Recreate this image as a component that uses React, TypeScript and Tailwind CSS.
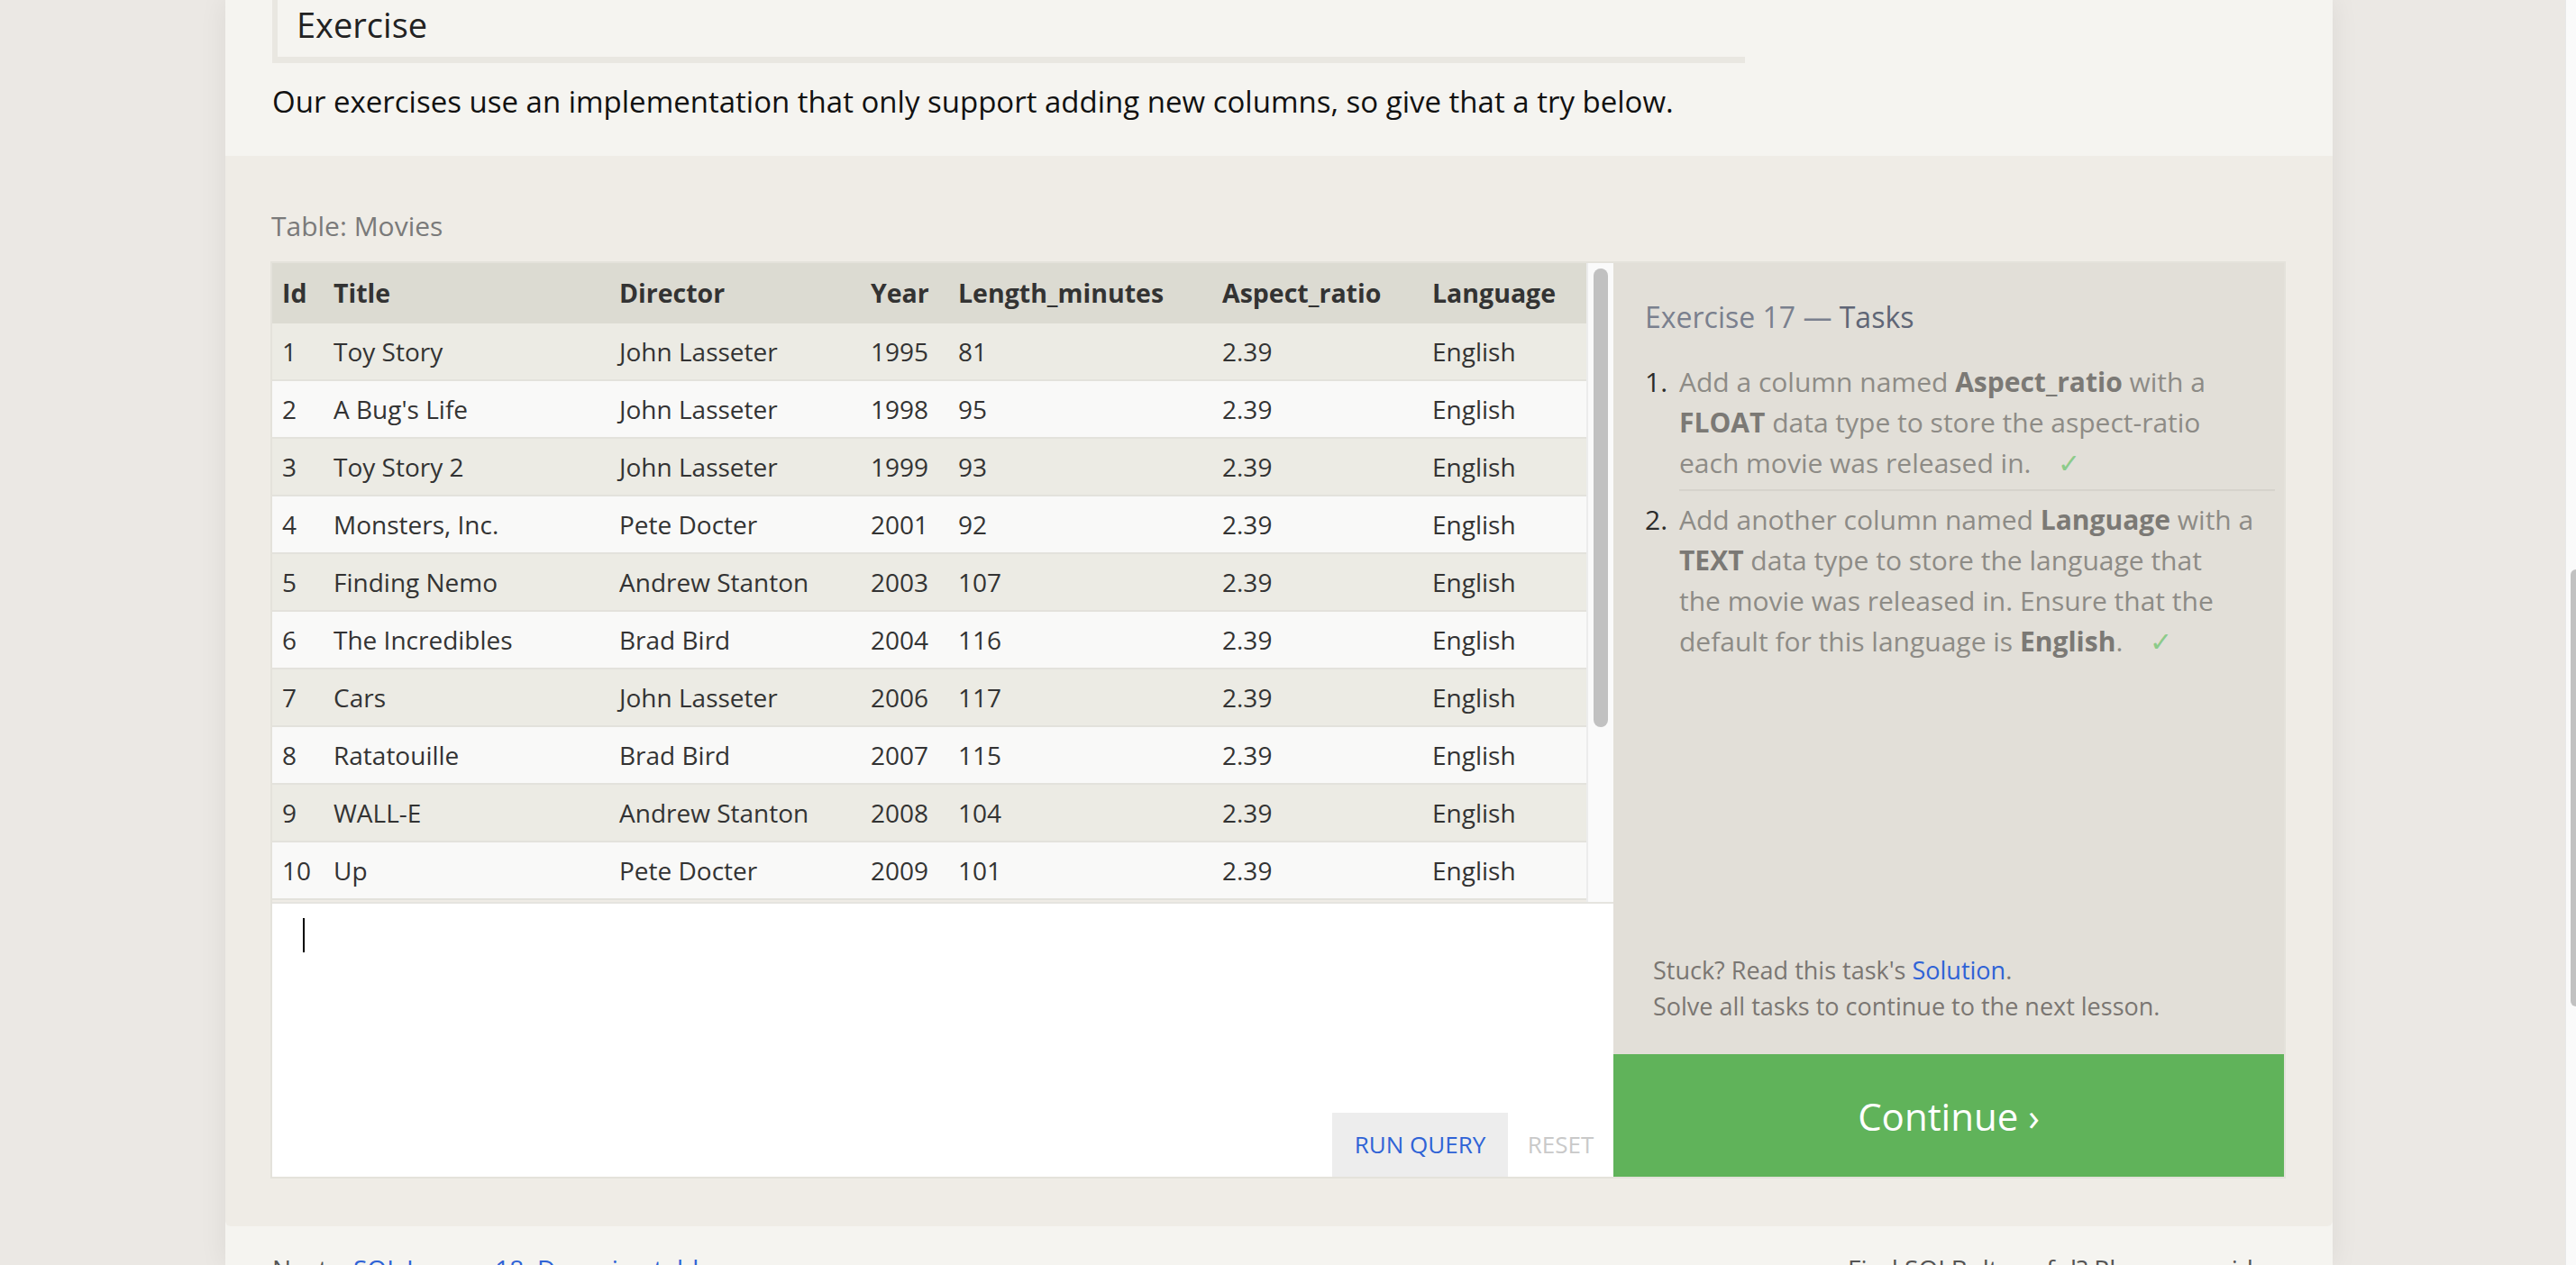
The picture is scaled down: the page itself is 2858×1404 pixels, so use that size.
const movies = [
  { id: 1, title: 'Toy Story', director: 'John Lasseter', year: 1995, length: 81 },
  { id: 2, title: "A Bug's Life", director: 'John Lasseter', year: 1998, length: 95 },
  { id: 3, title: 'Toy Story 2', director: 'John Lasseter', year: 1999, length: 93 },
  { id: 4, title: 'Monsters, Inc.', director: 'Pete Docter', year: 2001, length: 92 },
  { id: 5, title: 'Finding Nemo', director: 'Andrew Stanton', year: 2003, length: 107 },
  { id: 6, title: 'The Incredibles', director: 'Brad Bird', year: 2004, length: 116 },
  { id: 7, title: 'Cars', director: 'John Lasseter', year: 2006, length: 117 },
  { id: 8, title: 'Ratatouille', director: 'Brad Bird', year: 2007, length: 115 },
  { id: 9, title: 'WALL-E', director: 'Andrew Stanton', year: 2008, length: 104 },
  { id: 10, title: 'Up', director: 'Pete Docter', year: 2009, length: 101 },
];

const cols = 'grid grid-cols-[57px_317px_279px_97px_293px_233px_182px]';

function MoviesTable() {
  return (
    <div className="flex h-[709px]">
      <div className="w-[1458px] text-[28px] text-[#333]">
        {/* header */}
        <div className={`${cols} h-[67px] items-center bg-[#dcdbd2] text-[28.5px] font-bold`}>
          <div className="pl-[11px]">Id</div>
          <div className="pl-[11px]">Title</div>
          <div className="pl-[11px]">Director</div>
          <div className="pl-[11px]">Year</div>
          <div className="pl-[11px]">Length_minutes</div>
          <div className="pl-[11px]">Aspect_ratio</div>
          <div className="pl-[11px]">Language</div>
        </div>
        {movies.map((m, i) => (
          <div
            key={m.id}
            className={`${cols} h-[64px] items-center border-b-2 border-[#e3e2dc] ${
              i % 2 === 0 ? 'bg-[#ecebe4]' : 'bg-[#f9f9f8]'
            }`}
          >
            <div className="pl-[11px]">{m.id}</div>
            <div className="pl-[11px]">{m.title}</div>
            <div className="pl-[11px]">{m.director}</div>
            <div className="pl-[11px]">{m.year}</div>
            <div className="pl-[11px]">{m.length}</div>
            <div className="pl-[11px]">2.39</div>
            <div className="pl-[11px]">English</div>
          </div>
        ))}
      </div>
      {/* table scrollbar */}
      <div className="w-[30px] border-l-2 border-[#ececec] bg-[#fafafa] pt-[6px] pl-[6px]">
        <div className="h-[509px] w-[16px] rounded-full bg-[#c1c1c1]" />
      </div>
    </div>
  );
}

function Editor() {
  return (
    <div className="flex h-[305px] flex-col border-t-2 border-[#e5e4df] bg-white">
      <div className="ml-[34px] mt-[16px] h-[38px] w-[2px] bg-black" />
      <div className="mt-auto flex justify-end">
        <button className="flex h-[71px] w-[195px] items-center justify-center bg-[#ededed] text-[26px] text-[#2f63d6]">
          RUN QUERY
        </button>
        <button className="flex h-[71px] w-[117px] items-center justify-center text-[26px] text-[#c9c9c9]">
          RESET
        </button>
      </div>
    </div>
  );
}

function Check() {
  return <span className="ml-[30px] text-[#8ccb8a]">✓</span>;
}

function TasksPanel() {
  return (
    <div className="flex w-[744px] flex-col">
      <div className="flex h-[878px] flex-col bg-[#e2dfd8] pl-[35px] pr-[10px] pt-[38px]">
        <h3 className="text-[32px] leading-[44px] text-[#7a808e]">
          Exercise 17 — <span className="text-[#5f6676]">Tasks</span>
        </h3>
        <ol className="mt-[27px] text-[30px] leading-[45px] text-[#8d8b86]">
          <li className="flex">
            <span className="w-[38px] shrink-0 text-[#2b2b2b]">1.</span>
            <div className="flex-1 border-b-2 border-[#d6d3cc] pb-[7px]">
              Add a column named <b className="text-[#7b7975]">Aspect_ratio</b> with a
              <br />
              <b className="text-[#7b7975]">FLOAT</b> data type to store the aspect-ratio
              <br />
              each movie was released in.
              <Check />
            </div>
          </li>
          <li className="flex pt-[9px]">
            <span className="w-[38px] shrink-0 text-[#2b2b2b]">2.</span>
            <div className="flex-1">
              Add another column named <b className="text-[#7b7975]">Language</b> with a
              <br />
              <b className="text-[#7b7975]">TEXT</b> data type to store the language that
              <br />
              the movie was released in. Ensure that the
              <br />
              default for this language is <b className="text-[#7b7975]">English</b>.
              <Check />
            </div>
          </li>
        </ol>
        <div className="mt-auto pb-[33px] pl-[9px] text-[27px] leading-[40px] text-[#7a7672]">
          <p>
            Stuck? Read this task's <a className="text-[#2f63d6]">Solution</a>.
          </p>
          <p>Solve all tasks to continue to the next lesson.</p>
        </div>
      </div>
      <button className="flex h-[136px] items-center justify-center bg-[#60b35a] text-[42px] text-white">
        Continue ›
      </button>
    </div>
  );
}

export default function App() {
  return (
    <div className="flex h-[1404px] w-[2858px] overflow-hidden bg-[#ebe8e4] font-['Open_Sans',sans-serif]">
      <div className="w-[250px] shrink-0" />

      <main className="flex w-[2338px] shrink-0 flex-col bg-[#f5f4f0] shadow-[0_0_30px_rgba(0,0,0,0.07)]">
        {/* lesson text */}
        <section className="h-[173px] shrink-0 px-[52px]">
          <div className="h-[70px] w-[1634px] border-b-[7px] border-l-[6px] border-[#e9e7e1] pl-[21px] pt-[8px]">
            <h2 className="text-[38px] leading-none text-[#222]">Exercise</h2>
          </div>
          <p className="mt-[21px] text-[33px] leading-[44px] text-[#111]">
            Our exercises use an implementation that only support adding new columns, so give that a try below.
          </p>
        </section>

        {/* exercise */}
        <section className="h-[1188px] shrink-0 rounded-b-[6px] bg-[#efece6] px-[50px] pt-[58px]">
          <div className="pl-[1px] text-[30px] leading-[40px] text-[#7a7a7a]">Table: Movies</div>
          <div className="mt-[19px] flex w-[2236px] border-2 border-[#e4e2db]">
            <div className="flex w-[1488px] flex-col">
              <MoviesTable />
              <Editor />
            </div>
            <TasksPanel />
          </div>
        </section>

        {/* footer, cut by the bottom of the window */}
        <footer className="flex px-[52px] pt-[27px] text-[28px] leading-[40px] text-[#555]">
          <div className="w-[1748px] shrink-0 whitespace-nowrap">
            Next – <a className="text-[#2f63d6]">SQL Lesson 18: Dropping tables</a>
          </div>
          <div className="whitespace-nowrap">Find SQLBolt useful? Please consider</div>
        </footer>
      </main>

      <div className="w-[258px] shrink-0" />

      {/* page scrollbar */}
      <div className="w-[12px] shrink-0 border-l border-[#e8e8e8] bg-[#fafafa]">
        <div className="ml-auto mt-[632px] h-[485px] w-[6px] rounded-l-full bg-[#c1c1c1]" />
      </div>
    </div>
  );
}
